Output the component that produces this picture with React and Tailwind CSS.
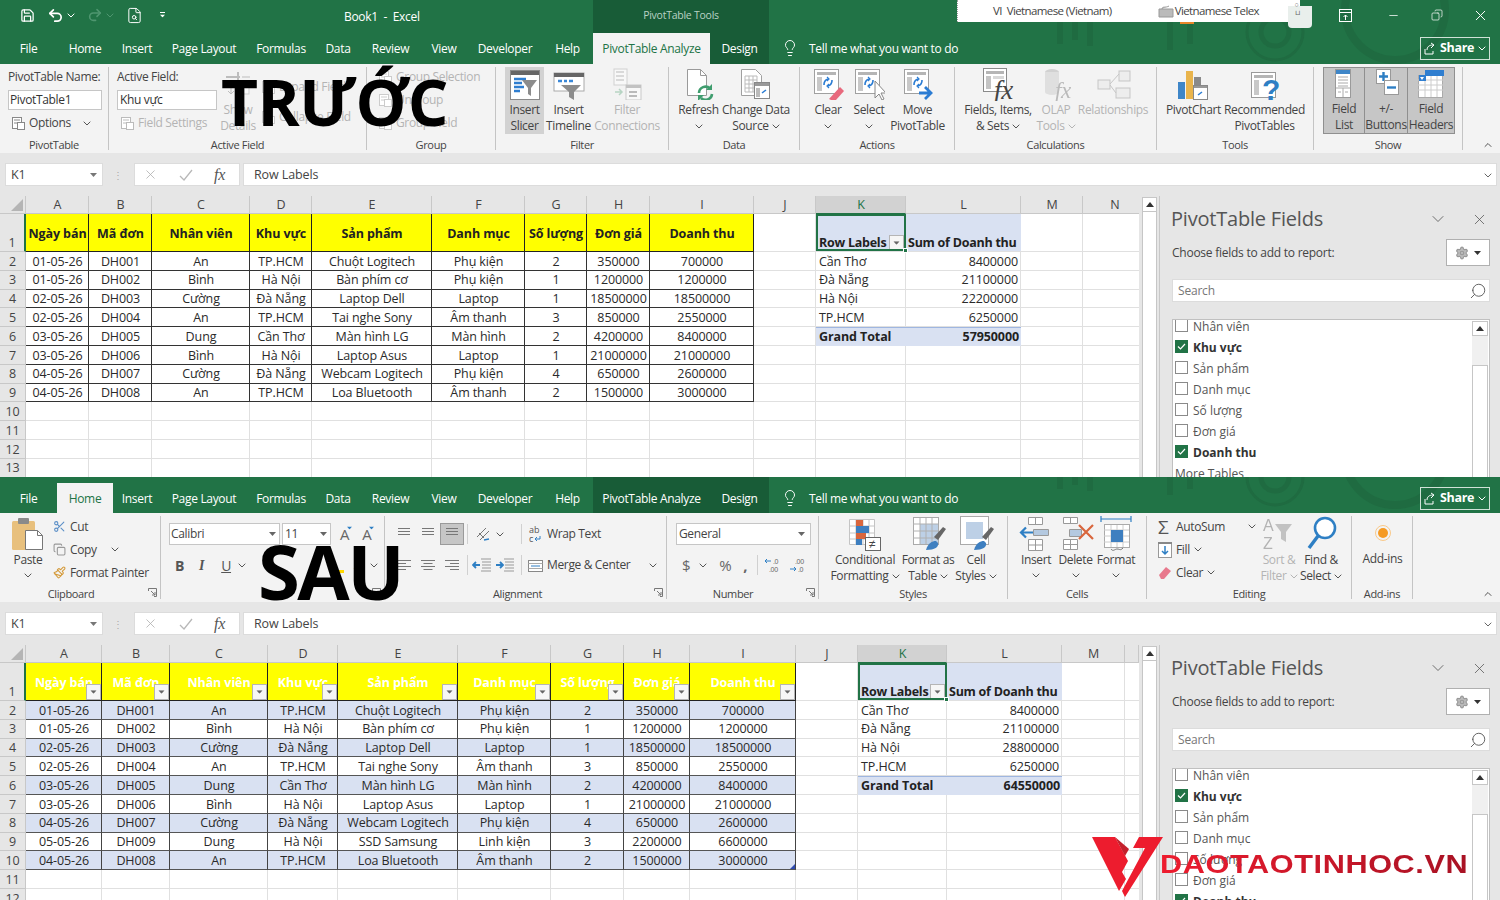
import React from "react";
import { Save, Undo2, Redo2, FileSearch, Minus, X, Copy, Lightbulb, Search, Settings, Scissors, Paintbrush, ChevronUp, ChevronDown } from "lucide-react";

const Chev = ({ c = "#555", cls = "" }) => (
  <svg width="8" height="5" viewBox="0 0 8 5" className={"inline-block shrink-0 " + cls}><path d="M.7.7 4 4 7.3.7" fill="none" stroke={c} strokeWidth="1" /></svg>
);
const Tri = ({ c = "#555", cls = "" }) => (
  <svg width="7" height="4" viewBox="0 0 7 4" className={"shrink-0 " + cls}><path d="M0 0h7L3.5 4z" fill={c} /></svg>
);
const S = ({ w = 32, h = 32, children, cls = "" }) => (
  <svg width={w} height={h} viewBox={`0 0 ${w} ${h}`} className={"shrink-0 " + cls}>{children}</svg>
);
const Arrows = ({ x = 12, y = 10, c = "#2b7cd3" }) => (
  <g fill="none" stroke={c} strokeWidth="1.6"><path d={`M${x} ${y + 7}a6 6 0 0 1 4-6`} /><path d={`M${x + 8} ${y + 2}a6 6 0 0 1-4 6`} /><path d={`M${x + 3} ${y - 1}l2 2-2 2M${x + 5} ${y + 6}l-2 2 2 2`} strokeWidth="1.2" /></g>
);
const PT = () => (
  <g><rect x="2.5" y="1.5" width="24" height="24" fill="#fff" stroke="#a0a0a0" /><rect x="5" y="4" width="19" height="3" fill="#b5b5b5" /><rect x="5" y="9" width="5" height="14" fill="#c8c8c8" /></g>
);

const ISlicer = () => <S><rect x="1.5" y="2.5" width="29" height="29" fill="#fff" stroke="#8a8a8a" /><rect x="2" y="3" width="28" height="4" fill="#666" /><path d="M5 11h12M5 15h8M5 19h10M5 23h6" stroke="#2f7ed0" strokeWidth="2.4" /><path d="M13 12h15l-6 8v8l-3-2v-6z" fill="#8c8c8c" /></S>;
const ITimeline = () => <S><rect x="1" y="5" width="30" height="18" fill="#fff" stroke="#aaa" /><rect x="1" y="5" width="30" height="4" fill="#666" /><path d="M5 13h4M11 13h3M16 13h4" stroke="#3a88d8" strokeWidth="2.4" /><path d="M8 17h20l-7 7v8l-5-3v-5z" fill="#8c8c8c" /></S>;
const IFilterConn = () => <S><g opacity=".45"><rect x="3" y="1" width="13" height="16" fill="#fff" stroke="#aaa" /><path d="M5 4h8M5 8h8M5 12h8" stroke="#bbb" strokeWidth="2" /><rect x="15" y="17" width="15" height="15" fill="#fff" stroke="#999" /><rect x="15" y="17" width="15" height="3" fill="#888" /><path d="M18 24h8M18 28h8" stroke="#777" strokeWidth="2" /><path d="M4 24h7m-3-3 3 3-3 3" stroke="#6fb08b" fill="none" strokeWidth="1.5" /></g></S>;
const IRefresh = () => <S w={34}><path d="M5.5 1.5h13l6 6v20h-19z" fill="#fff" stroke="#9a9a9a" /><path d="M18.5 1.5v6h6" fill="none" stroke="#9a9a9a" /><g fill="none" stroke="#3f9d6e" strokeWidth="2.6"><path d="M17 25a6.5 6.5 0 0 1 11-4.500" /><path d="M30 26a6.500 6.500 0 0 1-11 4" /></g><path d="M30 16v6h-6zM16 33v-6h6z" fill="#3f9d6e" /></S>;
const IChange = () => <S w={36}><path d="M3.500 1.500h14l6 6v20h-20z" fill="#fff" stroke="#a0a0a0" /><path d="M7 8h12v16H7zM7 12h12M7 16h12M7 20h12M11 8v16M15 8v16" stroke="#bbb" fill="none" /><rect x="16.500" y="14.500" width="15" height="16" fill="#fff" stroke="#888" /><rect x="17" y="15" width="14" height="3" fill="#999" /><rect x="18" y="20" width="4" height="9" fill="#bbb" /><path d="M24 25l4-3" stroke="#2b7cd3" strokeWidth="1.5" /></S>;
const IClear = () => <S><PT /><Arrows /><path d="M17 31l11-12 4 4-8 9h-5z" fill="#e8697d" /></S>;
const ISelect = () => <S><PT /><Arrows /><path d="M22 13v17l4-4 3 6 2-1-3-6h5z" fill="#fff" stroke="#888" /></S>;
const IMove = () => <S><PT /><Arrows /><path d="M17 25h12m-6-6 6 6-6 6" fill="none" stroke="#2b7cd3" strokeWidth="2.800" /></S>;
const IFx = () => <S w={36} h={34}><rect x="3.500" y="1.500" width="23" height="23" fill="#fff" stroke="#8a8a8a" /><rect x="6" y="4" width="18" height="3" fill="#b5b5b5" /><rect x="6" y="9" width="5" height="13" fill="#c4c4c4" /><rect x="13" y="9" width="11" height="3" fill="#d8d8d8" /><text x="14" y="32" fontFamily="Liberation Serif" fontStyle="italic" fontSize="27" fill="#444">fx</text></S>;
const IOlap = () => <S w={36} h={34}><g opacity=".45"><ellipse cx="14" cy="5" rx="7" ry="3" fill="#aaa" /><path d="M7 5v20a7 3 0 0 0 14 0V5z" fill="#c8c8c8" /><text x="17" y="31" fontFamily="Liberation Serif" fontStyle="italic" fontSize="23" fill="#777">fx</text></g></S>;
const IRelation = () => <S w={36} h={30}><g opacity=".5" stroke="#999" fill="#e8e8e8"><rect x="3" y="11" width="12" height="9" /><rect x="24" y="2" width="11" height="10" /><rect x="21" y="19" width="14" height="10" /><path d="M15 15l9-10M15 16l6 8" fill="none" /></g></S>;
const IChart = () => <S w={36}><rect x="2" y="14" width="7" height="17" fill="#3e86c8" /><rect x="10" y="3" width="7" height="28" fill="#e9b44c" /><rect x="18" y="9" width="7" height="12" fill="#8a8a8a" /><rect x="17.500" y="17.500" width="14" height="14" fill="#fff" stroke="#888" /><rect x="18" y="18" width="13" height="2" fill="#999" /><path d="M22 27l4-3" stroke="#2b7cd3" strokeWidth="1.500" /></S>;
const IRec = () => <S w={34}><rect x="3.500" y="4.500" width="24" height="25" fill="#fff" stroke="#9a9a9a" /><rect x="6" y="7" width="19" height="3" fill="#b5b5b5" /><rect x="6" y="12" width="5" height="15" fill="#c8c8c8" /><text x="14" y="32" fontFamily="Liberation Sans" fontWeight="700" fontSize="30" fill="#2e7fc4">?</text></S>;
const IFieldList = () => <S><rect x="7.500" y="1.500" width="15" height="28" fill="#fff" stroke="#9a9a9a" /><rect x="8" y="2" width="14" height="4" fill="#3e86c8" /><path d="M10 9h10M10 12h10M10 15h10M10 18h10" stroke="#aaa" /><path d="M8 20h14M15 20v9M10 24h3M17 24h3" stroke="#aaa" /></S>;
const IPM = () => <S><rect x="6.500" y="1.500" width="14" height="14" fill="#fff" stroke="#999" /><path d="M13.500 4v9M9 8.500h9" stroke="#2e7fc4" strokeWidth="2.400" /><rect x="14.500" y="12.500" width="14" height="14" fill="#fff" stroke="#999" /><path d="M17 19.500h9" stroke="#2e7fc4" strokeWidth="2.400" /></S>;
const IHeaders = () => <S><rect x="3.500" y="7.500" width="24" height="22" fill="#fff" stroke="#aaa" /><path d="M3 12h25M3 17h25M3 22h25M10 8v21M16 8v21M22 8v21" stroke="#ccc" /><rect x="10" y="2" width="19" height="6" fill="#2f7ed0" /><rect x="4" y="7" width="7" height="6" fill="#2f7ed0" /><path d="M5 9h4l-2 3z" fill="#fff" /></S>;

const IPaste = () => <S w={36} h={36}><rect x="2" y="5" width="23" height="29" rx="1.500" fill="#e8c07d" /><rect x="8" y="2" width="11" height="6" rx="1" fill="#8a8a8a" /><path d="M15.500 14.500h12l5 5v14h-17z" fill="#fff" stroke="#777" /><path d="M27.500 14.500v5h5" fill="none" stroke="#777" /></S>;
const ICond = () => <S h={38} w={40}><path d="M4.500 4.500h25v25h-25zM4.500 11h25M4.500 18h25M4.500 24h25M11 4.500v25M18 4.500v25M24 4.500v25" stroke="#c4c4c4" fill="#fff" /><rect x="11" y="5" width="7" height="6" fill="#d9663d" /><rect x="11" y="11" width="13" height="7" fill="#3e7fc0" /><rect x="11" y="18" width="10" height="6" fill="#d9663d" /><rect x="11" y="24" width="6" height="6" fill="#3e7fc0" /><rect x="20.500" y="22.500" width="15" height="13" fill="#fff" stroke="#666" /><text x="24" y="33" fontSize="12" fill="#444" fontFamily="Liberation Sans">≠</text></S>;
const IFmtTable = () => <S w={42} h={38}><rect x="6.500" y="2.500" width="25" height="27" fill="#fff" stroke="#aaa" /><rect x="13" y="9" width="18" height="20" fill="#bdd0e6" /><path d="M6 9h25M6 16h25M6 23h25M13 3v26M19 3v26M25 3v26" stroke="#b0b0b0" /><path d="M27 22l9-10 3 2-8 11z" fill="#666" /><path d="M19 35c2-7 6-9 10-9l2 2c1 4-3 7-12 7z" fill="#3e7fc0" /></S>;
const ICellStyle = () => <S w={42} h={38}><rect x="5.500" y="1.500" width="28" height="28" fill="#fff" stroke="#aaa" /><rect x="11" y="7" width="17" height="17" fill="#bdd0e6" /><path d="M27 22l9-10 3 2-8 11z" fill="#666" /><path d="M19 35c2-7 6-9 10-9l2 2c1 4-3 7-12 7z" fill="#3e7fc0" /></S>;
const IInsert = () => <S w={34} h={38}><path d="M9.500 2.500h14v7h-14zM16.500 2.500v7M9.500 24.500h14v11h-14zM9.500 30h14M16.500 24.500v11M14.500 14.500h15v6h-15zM22 14.500v6" stroke="#999" fill="#fff" /><rect x="15" y="15" width="14" height="5" fill="#b4c9e0" /><path d="M14 17.500H2m5-5-5 5 5 5" fill="none" stroke="#2e7fc4" strokeWidth="2.200" /></S>;
const IDelete = () => <S w={38} h={38}><path d="M6.500 2.500h14v6h-14zM13.500 2.500v6M6.500 24.500h14v10h-14zM6.500 29.500h14M13.500 24.500v10M12.500 14.500h12v7h-12z" stroke="#999" fill="#fff" /><rect x="13" y="15" width="11" height="6" fill="#b4c9e0" /><path d="M22 10l14 14M36 10 22 24" stroke="#d9663d" strokeWidth="2.200" /></S>;
const IFormat = () => <S w={38} h={38}><path d="M4 4h30M4 1v6M34 1v6" stroke="#2e7fc4" strokeWidth="1.200" fill="none" /><rect x="7.500" y="9.500" width="25" height="23" fill="#fff" stroke="#aaa" /><path d="M7 15h25M7 21h25M7 27h25M14 10v22M20 10v22M26 10v22" stroke="#ccc" /><rect x="14" y="15" width="12" height="12" fill="#3e7fc0" /><path d="M14 34c2 3 4 0 6 0 3 0 3 2 6-1" stroke="#777" fill="none" /></S>;
const ISort = () => <S w={34} h={36}><g opacity=".45"><text x="1" y="15" fontSize="16" fill="#666" fontFamily="Liberation Sans">A</text><text x="1" y="33" fontSize="16" fill="#666" fontFamily="Liberation Sans">Z</text><path d="M13 8h17l-6 8v10l-5-3v-7z" fill="#888" /></g></S>;
const IFind = () => <S w={34} h={38}><circle cx="21" cy="13" r="10" fill="#fff" stroke="#2e7fc4" strokeWidth="2.600" /><path d="M14 21 5 33" stroke="#2e7fc4" strokeWidth="3.400" /></S>;
const IDot = () => <S w={20} h={20}><circle cx="10" cy="10" r="5" fill="#f59a23" /><circle cx="10" cy="10" r="7.500" fill="none" stroke="#f9c98a" strokeWidth="1" /></S>;

const Lines = ({ a = "c", v = false }) => {
  const rows = v ? [[2, 12], [5, 12], [8, 12]] : [[3, 14], [6, 9], [9, 14], [12, 9]];
  return (
    <S w={16} h={16}>
      {rows.map(([y, w], i) => {
        const x = a === "l" ? 1 : a === "r" ? 15 - w : (16 - w) / 2;
        return <rect key={i} x={x} y={y} width={w} height="1" fill="#777" />;
      })}
    </S>
  );
};
const Indent = ({ rev }) => (
  <S w={20} h={16}>
    <path d="M9 2h10M10 5h9M10 8h9M10 11h9M9 14h10" stroke="#999" />
    <path d={rev ? "M1 8h7m-3-3 3 3-3 3" : "M8 8H1m3-3-3 3 3 3"} fill="none" stroke="#2e7fc4" strokeWidth="1.800" />
  </S>
);

const Big = ({ icon, l1, l2, chev, dis, cls = "", on = "" }) => (
  <div className={"flex flex-col items-center shrink-0 text-center whitespace-nowrap " + (dis ? "text-[#b4b4b4] " : "text-[#444] ") + cls + " " + on}>
    <div className="h-[35px] flex items-center justify-center">{icon}</div>
    <div className="h-[16px] leading-[16px] mt-px">{l1}</div>
    <div className="h-[16px] leading-[16px] flex items-center justify-center gap-[3px]">
      {l2}
      {chev && <Chev c={dis ? "#b4b4b4" : "#555"} />}
    </div>
  </div>
);
const Launcher = () => (
  <svg width="9" height="9" viewBox="0 0 9 9" className="absolute right-[3px] bottom-[2px]"><path d="M.5 3V.5H8.500V8.500H6M3 3l4 4M7 4v3H4" fill="none" stroke="#777" /></svg>
);
const Group = ({ label, cls, pad = "", launcher, children, lc = "" }) => (
  <div className={"relative flex flex-col shrink-0 h-[83px] mt-[3px] border-r border-[#c4c4c4] " + cls}>
    <div className={"flex h-[67px] shrink-0 " + pad}>{children}</div>
    <div className={"text-center text-[11px] leading-[14px] pt-[4px] text-[#444] whitespace-nowrap " + lc}>{label}</div>
    {launcher && <Launcher />}
  </div>
);
const Row = ({ icon, text, dis, cls = "", chev }) => (
  <div className={"flex items-center h-[23px] gap-[4px] whitespace-nowrap " + (dis ? "text-[#b4b4b4] " : "text-[#444] ") + cls}>
    {icon}
    <span>{text}</span>
    {chev}
  </div>
);
const SmallDoc = ({ c = "#aaa" }) => (
  <svg width="14" height="14" viewBox="0 0 14 14" className="shrink-0"><rect x="1.500" y="1.500" width="9" height="11" fill="#fff" stroke={c} /><path d="M3 4h6M3 7h6" stroke={c} /><rect x="6.500" y="6.500" width="7" height="7" fill="#fff" stroke={c} /></svg>
);

function RibbonAnalyze() {
  return (
    <div className="flex h-[89px] bg-[#f3f3f3] text-[12px] tracking-[-0.35px]">
      <Group label="PivotTable" cls="w-[109px]">
        <div className="pl-[8px] w-full">
          <div className="h-[20px] leading-[20px] text-[#444] whitespace-nowrap">PivotTable Name:</div>
          <div className="mt-[3px] w-[94px] h-[20px] bg-white border border-[#c6c6c6] leading-[18px] pl-[1px] text-[#333]">PivotTable1</div>
          <Row icon={<SmallDoc c="#888" />} text="Options" cls="h-[26px] pl-[3px]" chev={<Chev cls="ml-[8px]" />} />
        </div>
      </Group>
      <Group label="Active Field" cls="w-[258px]">
        <div className="pl-[8px] w-[112px] shrink-0">
          <div className="h-[20px] leading-[20px] text-[#444]">Active Field:</div>
          <div className="mt-[3px] w-[100px] h-[20px] bg-white border border-[#c6c6c6] leading-[18px] pl-[2px] text-[#333]">Khu vực</div>
          <Row dis icon={<SmallDoc c="#bbb" />} text="Field Settings" cls="h-[26px] pl-[3px]" />
        </div>
        <Big dis cls="w-[34px]" l1="Show" l2="Details" icon={<S w={26} h={26}><g opacity=".5"><path d="M1 6h14M13 1v10" stroke="#888" strokeWidth="2" /><path d="M17 6h8" stroke="#888" /><path d="M6 13v10m-3-3 3 3 3-3" stroke="#888" fill="none" /><rect x="12" y="14" width="12" height="9" fill="#fff" stroke="#aaa" /></g></S>} />
        <div className="pl-[6px] pt-[5px] flex flex-col">
          <Row dis icon={<SmallDoc c="#ccc" />} text="Expand Field" cls="h-[30px]" />
          <Row dis icon={<SmallDoc c="#ccc" />} text="Collapse Field" cls="h-[30px]" />
        </div>
      </Group>
      <Group label="Group" cls="w-[129px]">
        <div className="pl-[11px] -mt-[2px]">
          <Row dis icon={<SmallDoc c="#ccc" />} text="Group Selection" />
          <Row dis icon={<SmallDoc c="#ccc" />} text="Ungroup" />
          <Row dis icon={<SmallDoc c="#ccc" />} text="Group Field" />
        </div>
      </Group>
      <Group label="Filter" cls="w-[173px]" pad="pl-[9px]">
        <Big cls="w-[39px]" on="bg-[#d2d2d2]" l1="Insert" l2="Slicer" icon={<ISlicer />} />
        <Big cls="w-[49px]" l1="Insert" l2="Timeline" icon={<ITimeline />} />
        <Big dis cls="w-[68px]" l1="Filter" l2="Connections" icon={<IFilterConn />} />
      </Group>
      <Group label="Data" cls="w-[131px]" pad="pl-[9px]">
        <Big cls="w-[41px]" l1="Refresh" l2="" chev icon={<IRefresh />} />
        <Big cls="w-[74px]" l1="Change Data" l2="Source" chev icon={<IChange />} />
      </Group>
      <Group label="Actions" cls="w-[155px]" pad="pl-[8px]">
        <Big cls="w-[40px]" l1="Clear" l2="" chev icon={<IClear />} />
        <Big cls="w-[42px]" l1="Select" l2="" chev icon={<ISelect />} />
        <Big cls="w-[55px]" l1="Move" l2="PivotTable" icon={<IMove />} />
      </Group>
      <Group label="Calculations" cls="w-[202px]" pad="pl-[7px]">
        <Big cls="w-[72px]" l1="Fields, Items," l2="& Sets" chev icon={<IFx />} />
        <Big dis cls="w-[44px]" l1="OLAP" l2="Tools" chev icon={<IOlap />} />
        <Big dis cls="w-[70px]" l1="Relationships" l2="" icon={<IRelation />} />
      </Group>
      <Group label="Tools" cls="w-[157px]" pad="pl-[8px]">
        <Big cls="w-[57px]" l1="PivotChart" l2="" icon={<IChart />} />
        <Big cls="w-[85px]" l1="Recommended" l2="PivotTables" icon={<IRec />} />
      </Group>
      <Group label="Show" cls="w-[149px]" pad="pl-[9px]">
        <div className="flex h-[67px] bg-[#c6c6c6] border border-[#8f8f8f]">
          <Big cls="w-[41px] border-r border-[#8f8f8f]" l1="Field" l2="List" icon={<IFieldList />} />
          <Big cls="w-[43px] border-r border-[#8f8f8f]" l1="+/-" l2="Buttons" icon={<IPM />} />
          <Big cls="w-[46px]" l1="Field" l2="Headers" icon={<IHeaders />} />
        </div>
      </Group>
      <div className="flex-1 flex justify-end items-end pr-[6px] pb-[2px]"><ChevronUp size={12} color="#555" /></div>
    </div>
  );
}

function RibbonHome() {
  return (
    <div className="flex h-[89px] bg-[#f3f3f3] text-[12px] tracking-[-0.35px]">
      <Group label="Clipboard" cls="w-[161px]" launcher lc="pr-[18px]">
        <Big cls="w-[56px]" l1="Paste" l2="" chev icon={<IPaste />} />
        <div className="-mt-[1px] -ml-[3px]">
          <Row icon={<Scissors size={13} color="#5b8fc7" />} text="Cut" />
          <Row icon={<Copy size={13} color="#999" />} text="Copy" chev={<Chev cls="ml-[10px]" />} />
          <Row icon={<Paintbrush size={13} color="#d49a3a" />} text="Format Painter" />
        </div>
      </Group>
      <Group label="Font" cls="w-[224px]" launcher>
        <div className="pl-[8px] w-full">
          <div className="flex items-center mt-[7px] h-[22px] gap-[2px]">
            <div className="w-[111px] h-[22px] bg-white border border-[#c6c6c6] flex items-center justify-between px-[1px] pr-[3px] text-[#444]">Calibri<Tri c="#666" /></div>
            <div className="w-[49px] h-[22px] bg-white border border-[#c6c6c6] flex items-center justify-between px-[2px] pr-[3px] text-[#444]">11<Tri c="#666" /></div>
            <span className="ml-[7px] text-[15px] text-[#666] relative">A<Tri c="#2e7fc4" cls="absolute -right-[4px] top-[3px] scale-75" /></span>
            <span className="ml-[11px] text-[15px] text-[#666] relative">A<Tri c="#2e7fc4" cls="absolute -right-[4px] top-[3px] scale-75" /></span>
          </div>
          <div className="flex items-center mt-[9px] h-[22px] text-[14px] text-[#555]">
            <span className="ml-[6px] font-bold">B</span>
            <span className="ml-[15px] italic font-['Liberation_Serif',serif] font-bold">I</span>
            <span className="ml-[17px] underline">U</span>
            <Chev cls="ml-[7px]" />
            <span className="ml-[70px] w-[10px]" />
            <span className="ml-[4px] w-[14px] h-[3px] self-end mb-[3px] bg-[#ffd800]" />
            <span className="ml-[10px] relative font-medium border-b-[3px] border-[#e21a1a] leading-[16px]">A</span>
            <Chev cls="ml-[7px]" />
          </div>
        </div>
      </Group>
      <Group label="Alignment" cls="w-[282px]" launcher lc="pr-[16px]">
        <div className="pl-[7px] w-full">
          <div className="flex items-center mt-[7px] h-[22px]">
            <div className="w-[24px] flex justify-center"><Lines a="c" v /></div>
            <div className="w-[24px] flex justify-center"><Lines a="c" v /></div>
            <div className="w-[24px] h-[22px] flex justify-center items-center bg-[#c6c6c6] border border-[#9a9a9a]"><Lines a="c" v /></div>
            <span className="ml-[3px] h-[20px] border-l border-[#d0d0d0]" />
            <svg width="18" height="18" viewBox="0 0 18 18" className="ml-[6px]"><path d="M3 12 12 3M6 15 15 6M5 8l5 5" stroke="#777" fill="none" /><path d="M10 15l5-1" stroke="#2e7fc4" strokeWidth="1.500" /></svg>
            <Chev cls="ml-[4px]" />
            <span className="ml-[17px] h-[20px] border-l border-[#d0d0d0]" />
            <Row cls="ml-[7px]" icon={<span className="flex flex-col w-[14px] text-[9px] leading-[9px] text-[#555] font-medium tracking-[0px]"><span>ab</span><span className="flex items-center">c<svg width="7" height="6" viewBox="0 0 7 6" className="ml-px"><path d="M6 0v3H1m2-2L1 3l2 2" fill="none" stroke="#2e7fc4" /></svg></span></span>} text="Wrap Text" />
          </div>
          <div className="flex items-center mt-[9px] h-[22px]">
            <div className="w-[24px] flex justify-center"><Lines a="l" /></div>
            <div className="w-[24px] flex justify-center"><Lines a="c" /></div>
            <div className="w-[24px] flex justify-center"><Lines a="r" /></div>
            <span className="ml-[3px] h-[20px] border-l border-[#d0d0d0]" />
            <div className="ml-[4px]"><Indent /></div>
            <div className="ml-[3px]"><Indent rev /></div>
            <span className="ml-[6px] h-[20px] border-l border-[#d0d0d0]" />
            <Row cls="ml-[6px]" icon={<svg width="15" height="15" viewBox="0 0 15 15"><rect x=".5" y="2.500" width="14" height="11" fill="#fff" stroke="#888" /><path d="M.5 5.500h14M.5 10.500h14" stroke="#aaa" /><path d="M3 8h9" stroke="#2e7fc4" /></svg>} text="Merge & Center" chev={<Chev cls="ml-[15px]" />} />
          </div>
        </div>
      </Group>
      <Group label="Number" cls="w-[152px]" launcher lc="pr-[19px]">
        <div className="pl-[9px] w-full">
          <div className="flex items-center justify-between mt-[7px] w-[135px] h-[22px] bg-white border border-[#c6c6c6] px-[2px] pr-[5px] text-[#444]">General<Tri c="#666" /></div>
          <div className="flex items-center mt-[9px] h-[22px] text-[#666] text-[15px]">
            <span className="ml-[6px]">$</span>
            <Chev cls="ml-[9px]" />
            <span className="ml-[12px]">%</span>
            <span className="ml-[12px] font-bold">,</span>
            <span className="ml-[10px] h-[20px] border-l border-[#d0d0d0]" />
            <svg width="20" height="16" viewBox="0 0 20 16" className="ml-[5px]"><path d="M8 4H2m2-2L2 4l2 2" stroke="#2e7fc4" fill="none" /><text x="10" y="7" fontSize="7" fill="#666" fontFamily="Liberation Sans">.0</text><text x="6" y="15" fontSize="7" fill="#666" fontFamily="Liberation Sans">.00</text></svg>
            <svg width="20" height="16" viewBox="0 0 20 16" className="ml-[5px]"><text x="7" y="7" fontSize="7" fill="#666" fontFamily="Liberation Sans">.00</text><path d="M2 12h6M6 10l2 2-2 2" stroke="#2e7fc4" fill="none" /><text x="10" y="15" fontSize="7" fill="#666" fontFamily="Liberation Sans">.0</text></svg>
          </div>
        </div>
      </Group>
      <Group label="Styles" cls="w-[189px]" pad="pl-[9px]">
        <Big cls="w-[74px]" l1="Conditional" l2="Formatting" chev icon={<ICond />} />
        <Big cls="w-[52px]" l1="Format as" l2="Table" chev icon={<IFmtTable />} />
        <Big cls="w-[44px]" l1="Cell" l2="Styles" chev icon={<ICellStyle />} />
      </Group>
      <Group label="Cells" cls="w-[139px]" pad="pl-[9px]">
        <Big cls="w-[38px]" l1="Insert" l2="" chev icon={<IInsert />} />
        <Big cls="w-[41px]" l1="Delete" l2="" chev icon={<IDelete />} />
        <Big cls="w-[40px]" l1="Format" l2="" chev icon={<IFormat />} />
      </Group>
      <Group label="Editing" cls="w-[205px]" pad="pl-[11px]">
        <div className="w-[100px] shrink-0 -mt-[1px]">
          <Row icon={<span className="text-[19px] leading-[20px] w-[14px] text-[#555]">Σ</span>} text="AutoSum" chev={<Chev cls="ml-[19px]" />} />
          <Row icon={<svg width="14" height="16" viewBox="0 0 14 16"><rect x=".5" y=".5" width="13" height="15" fill="#fff" stroke="#999" /><rect x="0" y="0" width="14" height="2" fill="#888" /><path d="M7 4v8m-3-3 3 3 3-3" fill="none" stroke="#2e7fc4" strokeWidth="1.500" /></svg>} text="Fill" chev={<Chev />} />
          <Row icon={<svg width="14" height="14" viewBox="0 0 14 14"><path d="M1 9l7-8 5 4-7 8H3z" fill="#e8798d" /></svg>} text="Clear" chev={<Chev />} />
        </div>
        <Big dis cls="w-[42px]" l1="Sort &" l2="Filter" chev icon={<ISort />} />
        <Big cls="w-[42px]" l1="Find &" l2="Select" chev icon={<IFind />} />
      </Group>
      <Group label="Add-ins" cls="w-[61px]" pad="pl-[10px]">
        <Big cls="w-[41px]" l1="Add-ins" l2="" icon={<IDot />} />
      </Group>
      <div className="flex-1 flex justify-end items-end pr-[6px] pb-[2px]"><ChevronUp size={12} color="#555" /></div>
    </div>
  );
}

const TABS = [
  ["File", "w-[57px]"], ["Home", "w-[56px]"], ["Insert", "w-[48px]"], ["Page Layout", "w-[86px]"], ["Formulas", "w-[68px]"],
  ["Data", "w-[46px]"], ["Review", "w-[59px]"], ["View", "w-[48px]"], ["Developer", "w-[74px]"], ["Help", "w-[51px]"],
];

const Decor = ({ cls = "" }) => (
  <svg width="500" height="64" viewBox="0 0 500 64" className={"absolute right-0 pointer-events-none " + cls}>
    <g fill="none" stroke="#1f6b41" strokeWidth="5"><circle cx="275" cy="32" r="14" /><circle cx="275" cy="32" r="28" strokeWidth="3" /><circle cx="395" cy="10" r="50" strokeWidth="8" /><path d="M60 10v34M75 10v30M90 10v36M170 0v50M190 0v44" strokeWidth="6" /></g>
  </svg>
);

function TabBar({ active, top }) {
  return (
    <div className={"relative flex overflow-hidden bg-[#217346] text-white text-[12px] tracking-[-0.32px] " + (top ? "h-[32px]" : "h-[36px] pt-[6px]")}>
      <Decor cls="-top-[32px]" />
      {TABS.map(([t, w]) => (
        <div key={t} className={"relative flex items-center justify-center pt-px shrink-0 " + w + (active === t ? " bg-[#f3f3f3] text-[#217346]" : "")}>{t}</div>
      ))}
      <div className={"relative flex w-[176px] shrink-0 bg-[#185c37] " + (top ? "" : "-mt-[6px] pt-[6px]")}>
        <div className={"flex items-center justify-center pt-px w-[117px] " + (active === "PivotTable Analyze" ? "bg-[#f3f3f3] text-[#217346] mt-px" : "")}>PivotTable Analyze</div>
        <div className="flex items-center justify-center pt-px w-[59px]">Design</div>
      </div>
      <div className="relative flex items-center ml-[12px] gap-[10px]">
        <Lightbulb size={18} strokeWidth={1.3} color="#fff" />
        <span className="pt-px">Tell me what you want to do</span>
      </div>
      <div className={"relative ml-auto mr-[10px] w-[70px] h-[23px] border border-[#d0e2d7] flex items-center justify-center gap-[4px] font-bold text-[12.5px] " + (top ? "mt-[5px]" : "mt-[4px]")}>
        <svg width="12" height="13" viewBox="0 0 12 13"><path d="M1 7v5h8V9M3 8c0-3 2-5 6-5M7 1l3 2-3 3" fill="none" stroke="#fff" /></svg>
        <span>Share</span>
        <Chev c="#fff" />
      </div>
    </div>
  );
}

function TitleBar() {
  return (
    <div className="relative flex h-[32px] overflow-hidden bg-[#217346] text-white">
      <Decor cls="top-0" />
      <div className="relative flex items-center w-[593px] shrink-0 pl-[20px] pb-[2px]">
        <Save size={15} strokeWidth={2} />
        <Undo2 size={17} strokeWidth={2.400} className="ml-[12px]" />
        <Chev c="#fff" cls="ml-[3px]" />
        <Redo2 size={16} color="#4f9670" strokeWidth={2.400} className="ml-[12px]" />
        <Chev c="#4f9670" cls="ml-[3px]" />
        <FileSearch size={17} strokeWidth={1.400} className="ml-[12px]" />
        <span className="ml-[16px] flex flex-col items-center gap-[1px]"><span className="w-[5px] h-px bg-white" /><Tri c="#fff" cls="scale-75" /></span>
        <span className="ml-[178px] pt-[3px] text-[12px] tracking-[-0.3px] whitespace-pre">{"Book1  -  Excel"}</span>
      </div>
      <div className="relative w-[176px] shrink-0 bg-[#185c37] text-[#b9d2c4] text-[10.5px] tracking-[-0.25px] flex justify-center pt-[8px] leading-[14px]">PivotTable Tools</div>
      <div className="relative ml-[188px] w-[343px] h-[22px] bg-white text-[#444] text-[11.5px] tracking-[-0.6px] flex items-center whitespace-nowrap border-l border-dotted border-[#999]">
        <span className="ml-[35px] whitespace-pre">{"VI  Vietnamese (Vietnam)"}</span>
        <svg width="16" height="13" viewBox="0 0 16 13" className="ml-[46px]"><path d="M1 4h14v8H1zM4 4c0-3 4-1 7-3" fill="#bbb" stroke="#999" /></svg>
        <span className="ml-px">Vietnamese Telex</span>
        <span className="absolute -right-[12px] top-[6px] w-[24px] h-[22px] bg-[#e9efec] rounded-b-[4px]" />
        <span className="absolute right-[1px] top-[1px] text-[7px] leading-[8px] text-[#666] flex flex-col"><span>○</span><span>⊔</span></span>
        <span className="absolute left-[222px] -bottom-[2px] w-[14px] h-[2px] bg-[#e8862a]" />
      </div>
      <div className="relative flex-1 flex items-center pb-[2px]">
        <svg width="13" height="13" viewBox="0 0 13 13" className="ml-[39px]"><rect x=".5" y=".5" width="12" height="12" fill="none" stroke="#fff" /><path d="M1 3.500h11M6.500 11V6M4.500 8l2-2 2 2" stroke="#fff" fill="none" /></svg>
        <Minus size={13} className="ml-[35px]" strokeWidth={1.400} />
        <Copy size={12} className="ml-[31px] scale-x-[-1]" strokeWidth={1.400} />
        <X size={17} className="ml-[29px]" strokeWidth={1.400} />
      </div>
    </div>
  );
}

function FormulaBar() {
  return (
    <div className="flex items-center h-[23px] mt-[10px] text-[12.5px] tracking-[-0.1px] text-[#444]">
      <div className="ml-[5px] w-[98px] h-[23px] pt-px bg-white border border-[#dcdcdc] flex items-center justify-between px-[5px]">K1<Tri c="#777" /></div>
      <span className="ml-[13px] text-[#aaa] text-[10px] leading-[6px] flex flex-col items-center w-[4px]"><span>⋮</span></span>
      <div className="ml-[14px] w-[106px] h-[23px] bg-white border border-[#dcdcdc] flex items-center text-[#b0b0b0]">
        <X size={15} className="ml-[8px]" strokeWidth={1.300} />
        <svg width="16" height="14" viewBox="0 0 16 14" className="ml-[20px]"><path d="M2 8l4 4 8-10" fill="none" stroke="#b8b8b8" strokeWidth="1.300" /></svg>
        <span className="ml-[20px] font-['Liberation_Serif',serif] italic text-[16px] text-[#555] leading-[20px]">fx</span>
      </div>
      <div className="ml-[3px] w-[1254px] h-[23px] pt-px bg-white border border-[#dcdcdc] flex items-center justify-between pl-[10px] pr-[4px]">Row Labels<Chev c="#666" /></div>
    </div>
  );
}

const DATA = {
  DH001: ["01-05-26", "DH001", "An", "TP.HCM", "Chuột Logitech", "Phụ kiện", "2", "350000", "700000"],
  DH002: ["01-05-26", "DH002", "Bình", "Hà Nội", "Bàn phím cơ", "Phụ kiện", "1", "1200000", "1200000"],
  DH003: ["02-05-26", "DH003", "Cường", "Đà Nẵng", "Laptop Dell", "Laptop", "1", "18500000", "18500000"],
  DH004: ["02-05-26", "DH004", "An", "TP.HCM", "Tai nghe Sony", "Âm thanh", "3", "850000", "2550000"],
  DH005: ["03-05-26", "DH005", "Dung", "Cần Thơ", "Màn hình LG", "Màn hình", "2", "4200000", "8400000"],
  DH006: ["03-05-26", "DH006", "Bình", "Hà Nội", "Laptop Asus", "Laptop", "1", "21000000", "21000000"],
  DH007: ["04-05-26", "DH007", "Cường", "Đà Nẵng", "Webcam Logitech", "Phụ kiện", "4", "650000", "2600000"],
  DH008: ["04-05-26", "DH008", "An", "TP.HCM", "Loa Bluetooth", "Âm thanh", "2", "1500000", "3000000"],
  DH009: ["05-05-26", "DH009", "Dung", "Hà Nội", "SSD Samsung", "Linh kiện", "3", "2200000", "6600000"],
};
const HEAD = ["Ngày bán", "Mã đơn", "Nhân viên", "Khu vực", "Sản phẩm", "Danh mục", "Số lượng", "Đơn giá", "Doanh thu"];
const LET = ["A", "B", "C", "D", "E", "F", "G", "H", "I", "J", "K", "L", "M", "N"];

const FilterBtn = ({ cls = "" }) => (
  <span className={"absolute flex items-center justify-center w-[15px] h-[16px] bg-[#f6f6f6] border border-[#b5b5b5] " + cls}><Tri c="#666" cls="scale-90" /></span>
);

function Sheet({ gridCls, rows, table2, pivot, total, count, letters }) {
  const cells = [];
  cells.push(
    <div key="corner" className="bg-[#e6e6e6] border-r border-b border-[#c8c8c8] flex items-end justify-end p-[2px]">
      <svg width="12" height="12" viewBox="0 0 12 12"><path d="M12 0v12H0z" fill="#b5b5b5" /></svg>
    </div>
  );
  letters.forEach((l) => {
    cells.push(
      <div key={"h" + l} className={"flex items-center justify-center pt-px pl-px border-r border-b border-[#c8c8c8] " + (l === "K" ? "bg-[#d2d2d2] text-[#217346] border-b-[#217346]" : "bg-[#e6e6e6] text-[#444]")}>{l === "N" && table2 ? "" : l}</div>
    );
  });
  for (let r = 1; r <= count; r++) {
    const rec = r >= 2 ? rows[r - 2] : null;
    cells.push(
      <div key={"r" + r} className={"flex justify-center border-r border-b border-[#c8c8c8] bg-[#e6e6e6] text-[#444] " + (r === 1 ? "items-end leading-[16px] border-r-2 border-r-[#217346]" : "items-center pt-[2px]")}>{r}</div>
    );
    for (let c = 0; c < 9; c++) {
      let cls = "border-r border-b border-[#e0e0e0]";
      let content = null;
      if (r === 1) {
        cls = "relative bg-[#ffff00] font-bold pt-[4px] pl-px border-r border-b border-[#222] " + (table2 ? "text-white" : "text-[#222]");
        content = (
          <>
            {HEAD[c]}
            {table2 && <FilterBtn cls="right-0 bottom-0" />}
          </>
        );
      } else if (rec) {
        const band = table2 && r % 2 === 0;
        cls = "relative pt-[2px] pl-px border-r border-b text-[#2a2a2a] " + (table2 ? "border-r-[#444] border-b-[#555] " : "border-[#333] ") + (band ? "bg-[#d9e1f2]" : "bg-white");
        content = (
          <>
            {rec[c]}
            {table2 && r === rows.length + 1 && c === 8 && <span className="absolute right-0 bottom-0 w-0 h-0 border-l-[5px] border-t-[5px] border-l-transparent border-t-transparent border-b-[5px] border-b-[#2f4bb0]" />}
          </>
        );
      }
      cells.push(<div key={r + "-" + c} className={"flex items-center justify-center whitespace-nowrap overflow-visible " + cls}>{content}</div>);
    }
    cells.push(<div key={r + "J"} className="border-r border-b border-[#e0e0e0]" />);
    if (r === 1) {
      cells.push(
        <div key="K1" className="relative bg-[#d9e1f2] border-b border-[#e0e0e0] flex items-end pl-[3px] leading-[16px] tracking-[-0.25px] font-bold text-[#222] whitespace-nowrap">
          Row Labels
          <FilterBtn cls="right-[2px] bottom-0" />
          <span className="absolute inset-0 border-2 border-[#217346] pointer-events-none" />
          <span className="absolute -right-[2px] -bottom-[2px] w-[5px] h-[5px] bg-[#217346] border border-white" />
        </div>
      );
      cells.push(<div key="L1" className="bg-[#d9e1f2] border-b border-[#e0e0e0] flex items-end pl-[2px] leading-[16px] tracking-[-0.25px] font-bold text-[#222] whitespace-nowrap">Sum of Doanh thu</div>);
    } else if (r <= 5) {
      const [a, b] = pivot[r - 2];
      cells.push(<div key={r + "K"} className="border-r border-b border-[#e0e0e0] flex items-center pl-[3px] pt-[2px] text-[#2a2a2a]">{a}</div>);
      cells.push(<div key={r + "L"} className="border-r border-b border-[#e0e0e0] flex items-center justify-end pr-[2px] pt-[2px] text-[#2a2a2a]">{b}</div>);
    } else if (r === 6) {
      cells.push(<div key={r + "K"} className="bg-[#d9e1f2] border-t border-[#9fb6e0] flex items-center pl-[3px] pt-[1px] font-bold text-[#222]">Grand Total</div>);
      cells.push(<div key={r + "L"} className="bg-[#d9e1f2] border-t border-[#9fb6e0] flex items-center justify-end pr-[2px] pt-[1px] font-bold text-[#222]">{total}</div>);
    } else {
      cells.push(<div key={r + "K"} className="border-r border-b border-[#e0e0e0]" />);
      cells.push(<div key={r + "L"} className="border-r border-b border-[#e0e0e0]" />);
    }
    cells.push(<div key={r + "M"} className="border-r border-b border-[#e0e0e0]" />);
    cells.push(<div key={r + "N"} className="border-b border-[#e0e0e0]" />);
  }
  return (
    <div className={"grid w-[1139px] h-full overflow-hidden bg-white text-[12.5px] tracking-[-0.1px] grid-rows-[18px_38px] auto-rows-[18.8px] content-start shrink-0 " + gridCls}>
      {cells}
    </div>
  );
}

const FIELDS = [["Nhân viên"], ["Khu vực", 1], ["Sản phẩm"], ["Danh mục"], ["Số lượng"], ["Đơn giá"], ["Doanh thu", 1], ["More Tables", 2]];

function ScrollBtn() {
  return <div className="h-[15px] shrink-0 bg-white border border-[#c6c6c6] flex items-center justify-center"><svg width="8" height="5" viewBox="0 0 8 5"><path d="M4 0l4 5H0z" fill="#333" /></svg></div>;
}

function Pane() {
  return (
    <div className="flex-1 h-full overflow-hidden pl-[12px] pr-[10px] bg-[#e6e6e6] border-l border-[#c8c8c8] text-[#444]">
      <div className="flex items-center h-[26px] mt-[10px]">
        <span className="text-[20px] tracking-[-0.2px] text-[#555] leading-[26px] -ml-px">PivotTable Fields</span>
        <ChevronDown size={20} strokeWidth={1} className="ml-auto mr-[23px]" color="#555" />
        <X size={17} strokeWidth={1.100} color="#555" className="mr-[2px]" />
      </div>
      <div className="flex items-center h-[27px] mt-[7px] text-[12px] tracking-[-0.25px]">
        <span>Choose fields to add to report:</span>
        <div className="ml-auto w-[44px] h-[27px] bg-white border border-[#b0b0b0] flex items-center justify-center gap-[5px]">
          <Settings size={14} color="#999" fill="#bbb" />
          <Tri c="#333" />
        </div>
      </div>
      <div className="h-[23px] mt-[13px] bg-white border border-[#dcdcdc] flex items-center justify-between pl-[5px] pr-[2px] text-[12px] tracking-[-0.2px] text-[#777]">
        Search
        <Search size={18} strokeWidth={1.200} className="scale-x-[-1]" color="#555" />
      </div>
      <div className="mt-[17px] h-[200px] bg-white border border-[#c0c0c0] flex overflow-hidden">
        <div className="flex-1 -mt-[4px] pl-[2px]">
          {FIELDS.map(([t, s]) => (
            <div key={t} className="flex items-center h-[21px] gap-[5px] text-[12px]">
              {s === 2 ? null : s ? (
                <span className="w-[13px] h-[13px] -mt-[3px] bg-[#217346] flex items-center justify-center"><svg width="9" height="7" viewBox="0 0 9 7"><path d="M1 3.500l2.500 2.500L8 1" fill="none" stroke="#fff" strokeWidth="1.200" /></svg></span>
              ) : (
                <span className="w-[13px] h-[13px] -mt-[3px] bg-white border border-[#8a8a8a]" />
              )}
              <span className={s === 1 ? "font-bold text-[#333]" : "text-[#555]"}>{t}</span>
            </div>
          ))}
        </div>
        <div className="w-[16px] flex flex-col mr-px mt-px">
          <ScrollBtn />
          <div className="h-[29px] bg-[#f0f0f0]" />
          <div className="h-[150px] bg-white border border-[#c6c6c6]" />
        </div>
      </div>
    </div>
  );
}

function Scrollbar() {
  return (
    <div className="w-[20px] shrink-0 h-full pl-[3px] pr-[2px] pt-px bg-[#e6e6e6]">
      <ScrollBtn />
      <div className="h-full bg-white border-x border-[#c6c6c6]" />
    </div>
  );
}

const P1 = [["Cần Thơ", "8400000"], ["Đà Nẵng", "21100000"], ["Hà Nội", "22200000"], ["TP.HCM", "6250000"]];
const P2 = [["Cần Thơ", "8400000"], ["Đà Nẵng", "21100000"], ["Hà Nội", "28800000"], ["TP.HCM", "6250000"]];

export default function App() {
  const d = DATA;
  const r1 = [d.DH001, d.DH002, d.DH003, d.DH004, d.DH005, d.DH006, d.DH007, d.DH008];
  const r2 = [d.DH001, d.DH002, d.DH003, d.DH004, d.DH005, d.DH006, d.DH007, d.DH009, d.DH008];
  return (
    <div className="relative w-[1500px] h-[900px] overflow-hidden flex flex-col bg-[#e6e6e6] font-['Open_Sans',sans-serif]">
      <div className="h-[477px] flex flex-col shrink-0 overflow-hidden">
        <TitleBar />
        <TabBar active="PivotTable Analyze" top />
        <RibbonAnalyze />
        <FormulaBar />
        <div className="flex mt-[10px] flex-1 min-h-0">
          <Sheet gridCls="grid-cols-[26px_63px_63px_98px_62px_120px_93px_62px_63px_104px_62px_90px_115px_62px_64px]" rows={r1} pivot={P1} total="57950000" count={14} letters={LET} />
          <Scrollbar />
          <Pane />
        </div>
      </div>
      <div className="h-[423px] flex flex-col shrink-0 overflow-hidden">
        <TabBar active="Home" />
        <RibbonHome />
        <FormulaBar />
        <div className="flex mt-[10px] flex-1 min-h-0">
          <Sheet table2 gridCls="grid-cols-[26px_76px_68px_98px_70px_120px_93px_73px_66px_106px_62px_89px_115px_63px_14px]" rows={r2} pivot={P2} total="64550000" count={13} letters={LET} />
          <Scrollbar />
          <Pane />
        </div>
      </div>

      <div className="absolute left-[221px] top-[58px] text-[64px] leading-[88px] font-bold tracking-[-0.5px] text-black">TRƯỚC</div>
      <div className="absolute left-[258px] top-[521px] text-[76px] leading-[100px] font-bold tracking-[-2.5px] text-black">SAU</div>

      <svg width="72" height="60" viewBox="0 0 72 60" className="absolute left-[1092px] top-[837px]">
        <path d="M0 0h23l13 24-6 11 4 7-7 12z" fill="#ed1c2e" />
        <path d="M23 0l14 12-4 7z" fill="#c4202c" />
        <path d="M71 0 33 60l-3-6L53 11H41l6-11z" fill="#ed1c2e" />
      </svg>
      <div className="absolute left-[1160px] top-[848px] w-[262px] origin-left scale-x-[1.18] text-[26px] leading-[32px] font-['Liberation_Sans',sans-serif] font-bold whitespace-nowrap text-transparent bg-clip-text bg-gradient-to-r from-[#ee1c2e] to-[#a81224] tracking-[0.5px]">DAOTAOTINHOC.VN</div>
    </div>
  );
}
